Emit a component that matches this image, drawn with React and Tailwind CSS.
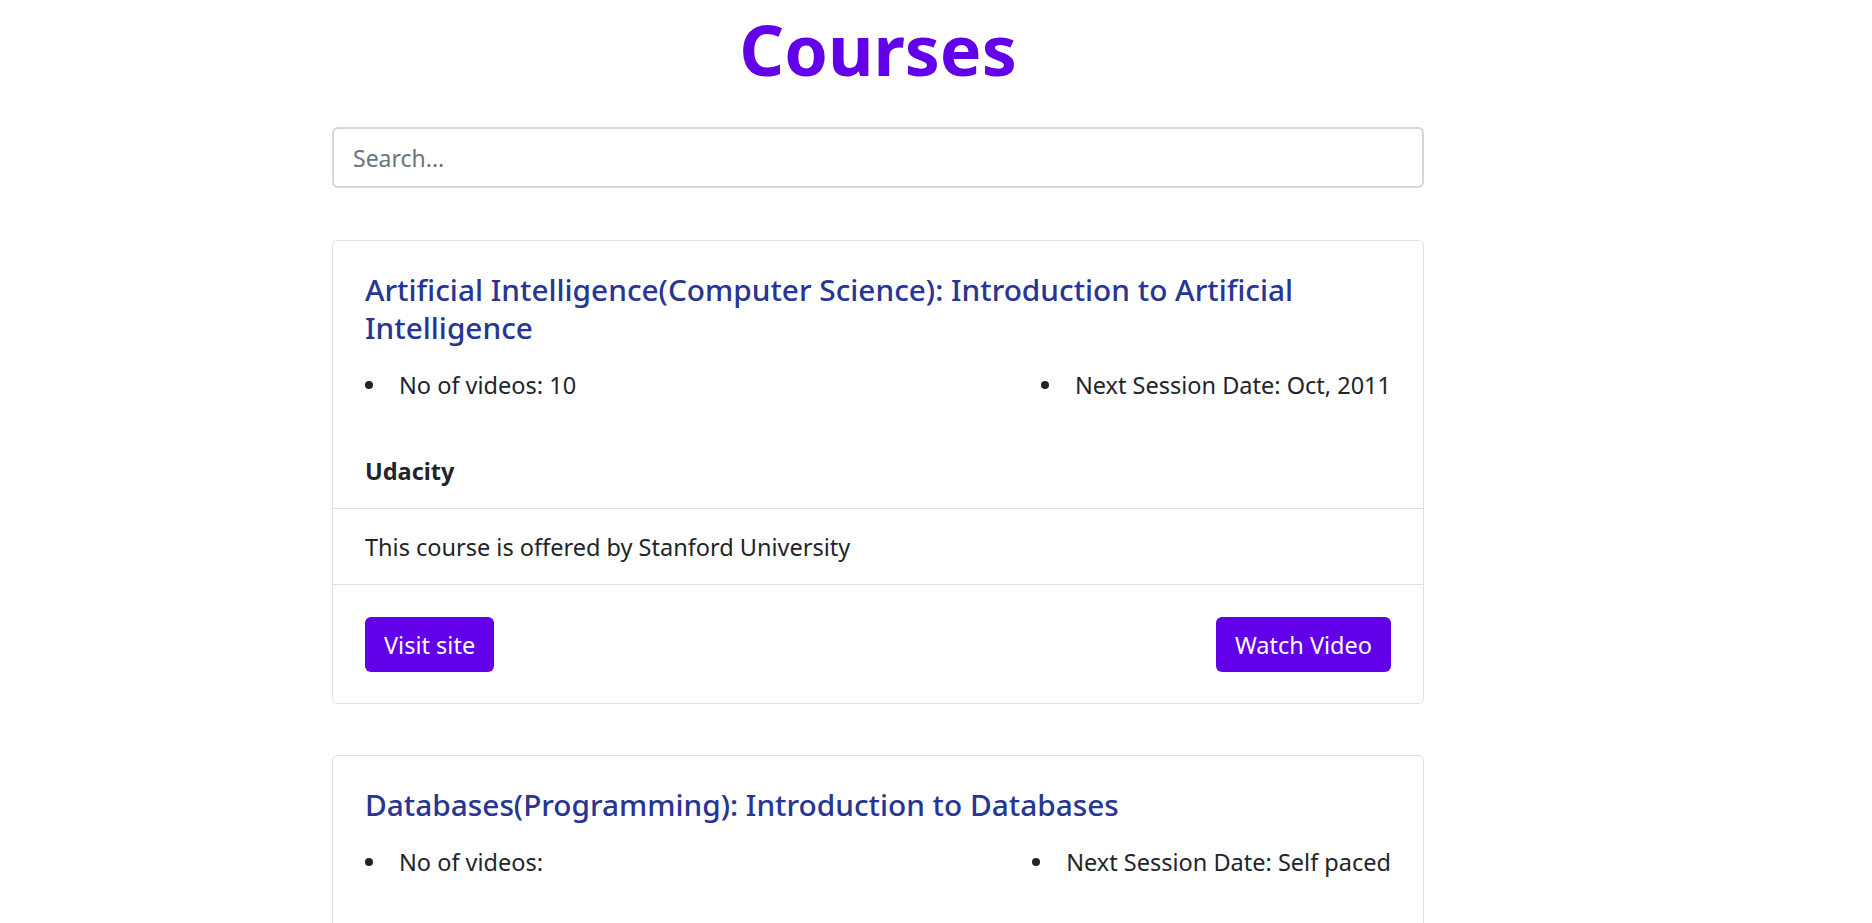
import React, { useState } from 'react';

const courses = [
    {
        id: 1,
        title: 'Artificial Intelligence(Computer Science): Introduction to Artificial Intelligence',
        videos: '10',
        nextSession: 'Oct, 2011',
        provider: 'Udacity',
        description: 'This course is offered by Stanford University',
    },
    {
        id: 2,
        title: 'Databases(Programming): Introduction to Databases',
        videos: '',
        nextSession: 'Self paced',
        provider: 'Stanford',
        description: 'This course is offered by Stanford University',
    },
    {
        id: 3,
        title: 'Machine Learning(Computer Science): Introduction to Machine Learning',
        videos: '18',
        nextSession: 'Self paced',
        provider: 'Coursera',
        description: 'This course is offered by Stanford University',
    },
];

function Bullet({ children }) {
    return (
        <li className="flex items-center h-[36px]">
            <span className="w-[8px] h-[8px] rounded-full bg-[#212529] mr-[26px] shrink-0"></span>
            <span>{children}</span>
        </li>
    );
}

function CourseCard({ course }) {
    return (
        <div className="border border-[#dfdfdf] rounded-[6px] bg-white mb-[51px]">
            <div className="px-[32px] pt-[30px] pb-[19px] border-b border-[#dfdfdf]">
                <h5 className="text-[29.8px] leading-[38px] text-[#283593] font-medium">{course.title}</h5>
                <div className="flex justify-between mt-[20px]">
                    <ul>
                        <Bullet>No of videos: {course.videos}</Bullet>
                    </ul>
                    <ul>
                        <Bullet>Next Session Date: {course.nextSession}</Bullet>
                    </ul>
                </div>
                <p className="font-bold mt-[50px]">{course.provider}</p>
            </div>
            <div className="px-[32px] pt-[20px] pb-[19px] border-b border-[#dfdfdf]">
                <p>{course.description}</p>
            </div>
            <div className="px-[32px] pt-[32px] pb-[31px] flex justify-between">
                <button className="bg-[#6200ea] text-white rounded-[6px] h-[55px] px-[19px]">Visit site</button>
                <button className="bg-[#6200ea] text-white rounded-[6px] h-[55px] px-[19px]">Watch Video</button>
            </div>
        </div>
    );
}

export default function App() {
    const [query, setQuery] = useState('');

    const filtered = courses.filter(c => c.title.toLowerCase().includes(query.toLowerCase()));

    return (
        <div className="min-h-screen bg-white text-[#212529] text-[23.5px] leading-[36px] font-['Noto_Sans',sans-serif]">
            <div className="pl-[332px]">
                <div className="w-[1092px]">
                    <h1 className="text-center text-[70px] leading-[92px] pt-[3px] font-bold text-[#6200ea]">Courses</h1>
                    <input
                        type="text"
                        value={query}
                        onChange={e => setQuery(e.target.value)}
                        placeholder="Search..."
                        className="mt-[32px] w-full h-[61px] px-[19px] text-[23px] border-2 border-[#d3d7dc] rounded-[6px] placeholder:text-[#6c757d] outline-none"
                    />
                    <div className="mt-[52px]">
                        {filtered.map(course => (
                            <CourseCard key={course.id} course={course} />
                        ))}
                    </div>
                </div>
            </div>
        </div>
    );
}
